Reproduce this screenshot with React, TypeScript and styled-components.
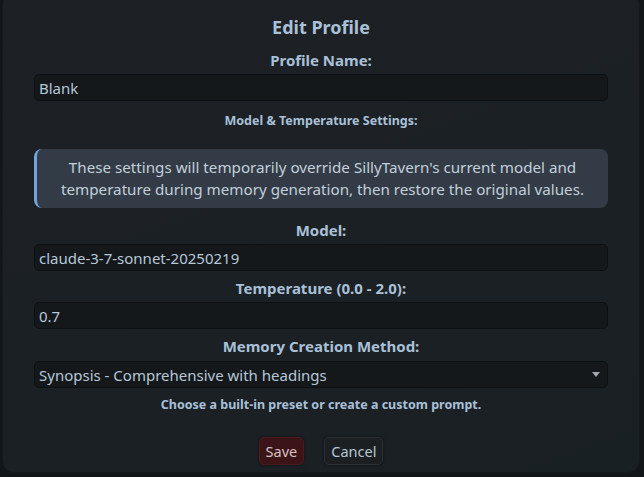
import React from 'react';
import styled, { createGlobalStyle } from 'styled-components';

const GlobalStyle = createGlobalStyle`
  html, body {
    margin: 0;
    padding: 0;
    background: #121618;
    font-family: "Noto Sans", "Open Sans", sans-serif;
  }
`;

const Page = styled.div`
  width: 644px;
  height: 477px;
  padding: 0 4px 0 2px;
  box-sizing: border-box;
  overflow: hidden;
`;

const Panel = styled.div`
  height: 481px;
  margin-top: -8px;
  padding: 22px 31px 0;
  box-sizing: border-box;
  border-radius: 12px;
  background: linear-gradient(160deg, #1d2125 0%, #1b2024 55%, #192024 100%);
  border: 1px solid #15191b;
  display: flex;
  flex-direction: column;
`;

const Title = styled.h3`
  margin: 0;
  text-align: center;
  font-size: 18px;
  line-height: 24px;
  font-weight: 700;
  color: #a9c0d8;
`;

const Label = styled.div<{ $small?: boolean; $top: number }>`
  margin-top: ${(p) => p.$top}px;
  text-align: center;
  font-size: ${(p) => (p.$small ? '12.5px' : '15px')};
  line-height: ${(p) => (p.$small ? '16px' : '20px')};
  font-weight: 700;
  color: #a9c0d8;
`;

const Field = styled.div<{ $top?: number }>`
  position: relative;
  flex: none;
  margin-top: ${(p) => p.$top ?? 4}px;
  height: 27px;
  box-sizing: border-box;
  border: 1px solid #0d1012;
  border-radius: 5px;
  background: #15181b;
  padding: 0 4px;
  display: flex;
  align-items: center;
  font-size: 15px;
  color: #b6c7d8;
`;

const Arrow = styled.span`
  position: absolute;
  right: 7px;
  top: 10px;
  width: 0;
  height: 0;
  border-left: 4px solid transparent;
  border-right: 4px solid transparent;
  border-top: 5px solid #a4a8ac;
`;

const InfoBox = styled.div`
  flex: none;
  margin-top: 20px;
  padding: 7px 16px 8px;
  border-radius: 8px;
  border-left: 3px solid #6fa4de;
  background: #333c46;
  text-align: center;
  font-size: 15.2px;
  line-height: 22px;
  color: #c3cfdb;
`;

const Buttons = styled.div`
  margin-top: 24px;
  display: flex;
  justify-content: center;
  gap: 20px;
`;

const Button = styled.button<{ $primary?: boolean }>`
  height: 28px;
  padding: 0 6px;
  border-radius: 5px;
  font-family: inherit;
  font-size: 14.5px;
  border: 1px solid ${(p) => (p.$primary ? '#4a1a1e' : '#2a2f34')};
  background: ${(p) => (p.$primary ? '#3b1417' : '#1b1f22')};
  color: ${(p) => (p.$primary ? '#d6c2c4' : '#b7c5d3')};
  box-shadow: 0 0 3px rgba(0, 0, 0, 0.5);
`;

export default function App() {
  return (
    <>
      <GlobalStyle />
      <Page>
        <Panel>
          <Title>Edit Profile</Title>
          <Label $top={11}>Profile Name:</Label>
          <Field>Blank</Field>
          <Label $small $top={12}>Model &amp; Temperature Settings:</Label>
          <InfoBox>
            These settings will temporarily override SillyTavern's current model and
            temperature during memory generation, then restore the original values.
          </InfoBox>
          <Label $top={12}>Model:</Label>
          <Field>claude-3-7-sonnet-20250219</Field>
          <Label $top={7}>Temperature (0.0 - 2.0):</Label>
          <Field>0.7</Field>
          <Label $top={7}>Memory Creation Method:</Label>
          <Field $top={5}>
            Synopsis - Comprehensive with headings
            <Arrow />
          </Field>
          <Label $small $top={9}>Choose a built-in preset or create a custom prompt.</Label>
          <Buttons>
            <Button $primary>Save</Button>
            <Button>Cancel</Button>
          </Buttons>
        </Panel>
      </Page>
    </>
  );
}
